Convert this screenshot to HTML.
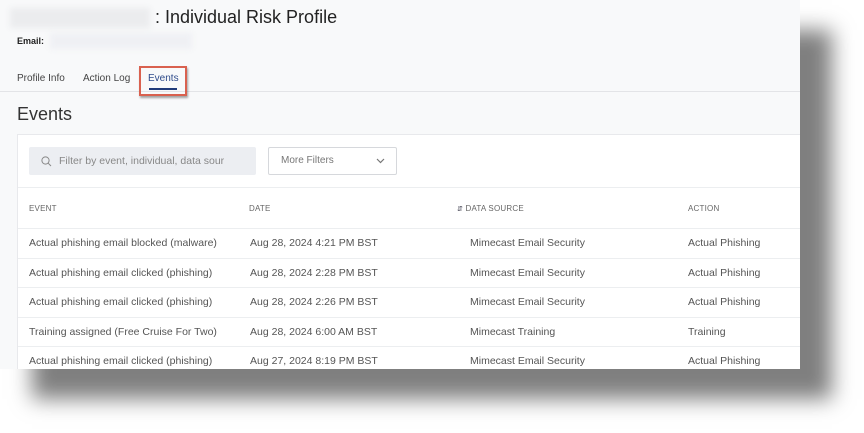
<!DOCTYPE html>
<html><head><style>
body{margin:0;width:864px;height:433px;background:#fff;overflow:hidden;font-family:"Liberation Sans",sans-serif;position:relative}
#p{position:absolute;left:0;top:0;width:800px;height:369px;background:#f8f9fa;box-shadow:32px 30px 20px rgba(0,0,0,0.5);overflow:hidden}
.blur{position:absolute;background:#ebecee;filter:blur(3px)}
h1{position:absolute;left:155px;top:7px;margin:0;font-size:18px;font-weight:normal;color:#222}
.em{position:absolute;left:17px;top:36px;font-size:9px;font-weight:bold;color:#222}
.tab{position:absolute;top:73px;font-size:10px;color:#444}
.tabline{position:absolute;left:0;top:91px;width:800px;height:1px;background:#e3e4e7}
h2{position:absolute;left:17px;top:104px;margin:0;font-size:18px;font-weight:normal;color:#333}
#card{position:absolute;left:17px;top:134px;width:790px;height:240px;background:#fff;border:1px solid #e8e9ec}
.search{position:absolute;left:11px;top:12px;width:227px;height:28px;background:#eceef2;border-radius:2px;font-size:10.5px;color:#888;line-height:28px}
.mf{position:absolute;left:250px;top:12px;width:127px;height:26px;border:1px solid #d6d8dc;border-radius:2px;font-size:10px;color:#777;line-height:26px}
.hl{position:absolute;left:0;width:790px;height:1px;background:#eceef0}
.th{position:absolute;top:69px;font-size:8px;color:#666;letter-spacing:.2px}
.td{position:absolute;font-size:10.5px;color:#555;white-space:nowrap}
</style></head><body>
<div id="p">
<div class="blur" style="left:10px;top:8px;width:140px;height:20px"></div>
<h1>: Individual Risk Profile</h1>
<div class="em">Email:</div>
<div class="blur" style="left:50px;top:33px;width:142px;height:16px;background:#eff0f4"></div>
<div class="tab" style="left:17px">Profile Info</div>
<div class="tab" style="left:83px">Action Log</div>
<div class="tab" style="left:148px;color:#2d4a8a">Events</div>
<div class="tabline"></div>
<div style="position:absolute;left:139px;top:66px;width:48px;height:30px;border:2px solid #d9614f;box-sizing:border-box;box-shadow:1px 2px 2px rgba(0,0,0,.35)"></div>
<div style="position:absolute;left:149px;top:88px;width:28px;height:2px;background:#1f3a7a"></div>
<h2>Events</h2>
<div id="card">
<div class="search"><svg style="position:absolute;left:12px;top:9px" width="11" height="11" viewBox="0 0 11 11"><circle cx="4.5" cy="4.5" r="3.6" fill="none" stroke="#888" stroke-width="1"/><line x1="7.2" y1="7.2" x2="10" y2="10" stroke="#888" stroke-width="1"/></svg><span style="position:absolute;left:30px">Filter by event, individual, data sour</span></div>
<div class="mf"><span style="position:absolute;left:12px">More Filters</span><svg style="position:absolute;left:107px;top:10px" width="9" height="6" viewBox="0 0 9 6"><path d="M1 1L4.5 4.5L8 1" fill="none" stroke="#777" stroke-width="1.2"/></svg></div>
<div class="hl" style="top:52px"></div>
<div class="th" style="left:11px">EVENT</div>
<div class="th" style="left:231px">DATE</div>
<div class="th" style="left:439px"><span style="color:#334;font-size:7px">&#8693;</span> DATA SOURCE</div>
<div class="th" style="left:670px">ACTION</div>
<div class="hl" style="top:93px"></div>
<div class="hl" style="top:123px"></div>
<div class="hl" style="top:152px"></div>
<div class="hl" style="top:182px"></div>
<div class="hl" style="top:211px"></div>
<div class="td" style="left:11px;top:102px">Actual phishing email blocked (malware)</div>
<div class="td" style="left:232px;top:102px">Aug 28, 2024 4:21 PM BST</div>
<div class="td" style="left:452px;top:102px">Mimecast Email Security</div>
<div class="td" style="left:670px;top:102px">Actual Phishing</div>
<div class="td" style="left:11px;top:132px">Actual phishing email clicked (phishing)</div>
<div class="td" style="left:232px;top:132px">Aug 28, 2024 2:28 PM BST</div>
<div class="td" style="left:452px;top:132px">Mimecast Email Security</div>
<div class="td" style="left:670px;top:132px">Actual Phishing</div>
<div class="td" style="left:11px;top:161px">Actual phishing email clicked (phishing)</div>
<div class="td" style="left:232px;top:161px">Aug 28, 2024 2:26 PM BST</div>
<div class="td" style="left:452px;top:161px">Mimecast Email Security</div>
<div class="td" style="left:670px;top:161px">Actual Phishing</div>
<div class="td" style="left:11px;top:191px">Training assigned (Free Cruise For Two)</div>
<div class="td" style="left:232px;top:191px">Aug 28, 2024 6:00 AM BST</div>
<div class="td" style="left:452px;top:191px">Mimecast Training</div>
<div class="td" style="left:670px;top:191px">Training</div>
<div class="td" style="left:11px;top:220px">Actual phishing email clicked (phishing)</div>
<div class="td" style="left:232px;top:220px">Aug 27, 2024 8:19 PM BST</div>
<div class="td" style="left:452px;top:220px">Mimecast Email Security</div>
<div class="td" style="left:670px;top:220px">Actual Phishing</div>
</div>
</div>
</body></html>
